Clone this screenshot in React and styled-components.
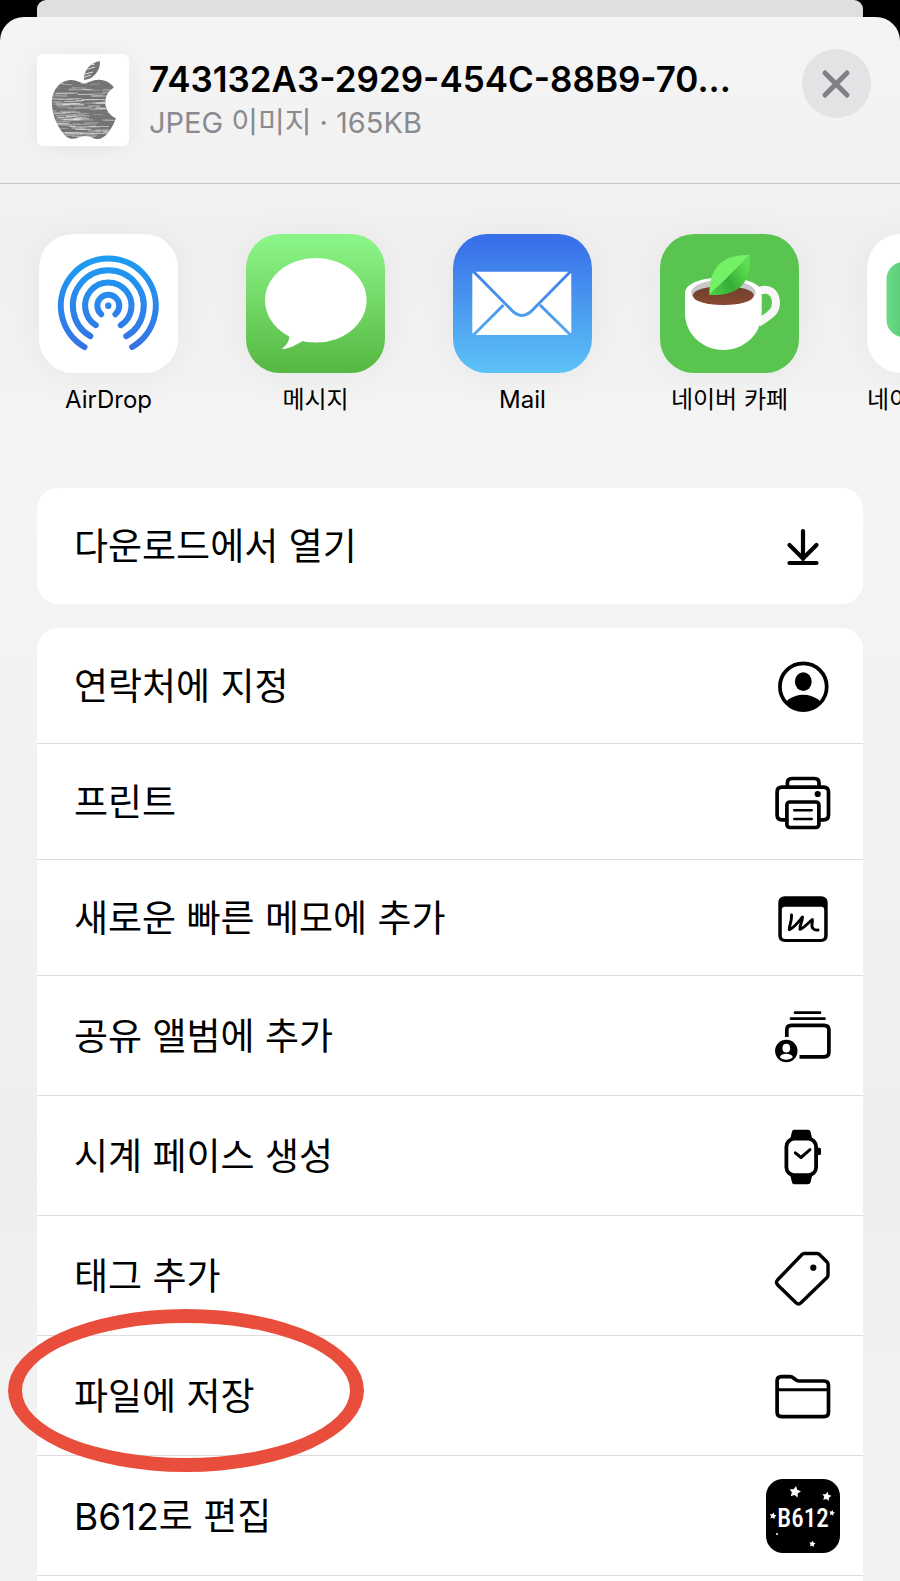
import React from 'react'
import styled, { css, createGlobalStyle } from 'styled-components';

const noise = (n) => {
  const v = Math.sin(n * 12.9898) * 43758.5453
  return v - Math.floor(v)
}

const scratches = Array.from({ length: 130 }, (_, i) => ({
  x: 8 + noise(i + 1) * 62,
  y: 28 + noise(i + 300) * 58,
  w: 5 + noise(i + 600) * 20,
  dy: noise(i + 900) * 1.4 - 0.7,
  o: 0.3 + noise(i + 1200) * 0.5,
}))

const star = (cx, cy, r) => Array.from({ length: 10 }, (_, i) => {
  const a = (i * 36 - 80) * Math.PI / 180
  const d = i % 2 ? r * 0.52 : r
  return `${(cx + d * Math.cos(a)).toFixed(2)},${(cy + d * Math.sin(a)).toFixed(2)}`
}).join(' ')

const AppleThumb = () => (
  <svg viewBox="0 0 92 92" aria-hidden="true">
    <clipPath id="apple">
      <path transform="translate(14.2 1.6) scale(.17 .174)" d="M318.7 268.7c-.2-36.7 16.4-64.4 50-84.8-18.8-26.9-47.2-41.7-84.7-44.6-35.5-2.8-74.3 20.7-88.5 20.7-15 0-49.4-19.7-76.4-19.7C63.3 141.2 4 184.8 4 273.5q0 39.3 14.4 81.2c12.8 36.7 59 126.7 107.2 125.2 25.2-.6 43-17.9 75.8-17.9 31.8 0 48.3 17.9 76.4 17.9 48.6-.7 90.4-82.5 102.6-119.3-65.2-30.7-61.7-90-61.7-91.9zm-56.6-164.2c27.3-32.4 24.8-61.9 24-72.5-24.1 1.4-52 16.4-67.9 34.9-17.5 19.8-27.8 44.3-25.6 71.9 26.1 2 49.9-11.4 69.5-34.3z" />
    </clipPath>
    <g clipPath="url(#apple)">
      <rect width="92" height="92" fill="#747474" />
      {scratches.map((s, i) => (
        <path key={i} d={`M${s.x} ${s.y}l${s.w} ${s.dy}`} stroke="#fff" strokeWidth=".7" opacity={s.o} />
      ))}
      <path d="M44 13l14-3M44 17l14-4M44 21l12-3M42 25l12-4" stroke="#fff" strokeWidth=".8" />
    </g>
  </svg>
)

const AirDropIcon = () => (
  <svg viewBox="0 0 139 139" aria-hidden="true">
    <linearGradient id="air" gradientUnits="userSpaceOnUse" x1="0" y1="22" x2="0" y2="116">
      <stop offset="0" stopColor="#1d9df3" />
      <stop offset="1" stopColor="#3671e4" />
    </linearGradient>
    <g fill="none" stroke="url(#air)" strokeWidth="6" strokeLinecap="round">
      <path d="M45.5 113A47.5 47.5 0 1 1 93.1 113" />
      <path d="M51.3 102.2A35.4 35.4 0 1 1 87.3 102.2" />
      <path d="M56.8 91.2A23.2 23.2 0 1 1 81.8 91.2" />
      <path d="M62.2 80.2A11 11 0 1 1 76.4 80.2" />
    </g>
    <circle cx="69.3" cy="71.7" r="3.2" fill="#2a87ea" />
  </svg>
)

const MessageIcon = () => (
  <svg viewBox="0 0 139 139" fill="#fff" aria-hidden="true">
    <ellipse cx="69.8" cy="66.3" rx="50.8" ry="42.3" />
    <path d="M42 98C45 104 42 110 36.7 114C35.8 115 37 115.3 38.5 115C45 114 50 110.5 56.5 107.2Z" />
  </svg>
)

const MailIcon = () => (
  <svg viewBox="0 0 139 139" aria-hidden="true">
    <linearGradient id="mail" gradientUnits="userSpaceOnUse" x1="0" y1="37" x2="0" y2="101">
      <stop offset="0" stopColor="#3f7fe9" />
      <stop offset="1" stopColor="#51a9ef" />
    </linearGradient>
    <rect x="19.3" y="37.7" width="99" height="63.4" rx="3" fill="#fff" />
    <path d="M20 37L57 74.5Q69 88.5 81 74.5L118 37M50.5 71L20 101.5M87 71L118 101.5" fill="none" stroke="url(#mail)" strokeWidth="2.9" />
  </svg>
)

const CafeIcon = () => (
  <svg viewBox="0 0 139 139" aria-hidden="true">
    <linearGradient id="leaf" x1="0" y1="1" x2="1" y2=".4">
      <stop offset="0" stopColor="#4fd64b" />
      <stop offset=".5" stopColor="#36ad35" />
      <stop offset="1" stopColor="#5ce052" />
    </linearGradient>
    <linearGradient id="coffee" x1="0" y1="0" x2="0" y2="1">
      <stop offset="0" stopColor="#68402e" />
      <stop offset="1" stopColor="#8d4a32" />
    </linearGradient>
    <path d="M99 57C109 53 116 59 116 69C116 79 108 82 98 89" fill="none" stroke="#f7f7f7" strokeWidth="8" />
    <path d="M25 59C25 50 40 43.5 63.3 43.5S101.7 50 101.7 59V79C101.7 100 84 116 63.3 116S25 100 25 79Z" fill="#fff" />
    <ellipse cx="63.3" cy="58.5" rx="32.3" ry="12.7" fill="#c9c9cb" />
    <ellipse cx="63.3" cy="61.5" rx="30.5" ry="9.6" fill="url(#coffee)" />
    <path d="M90 21C62 20 49 34 49.3 61Z" fill="#74f265" />
    <path d="M90 21C91 49 80 62 49.3 61Z" fill="url(#leaf)" />
  </svg>
)

const BoxIcon = () => (
  <svg viewBox="0 0 139 139" aria-hidden="true">
    <linearGradient id="box">
      <stop offset="0" stopColor="#6bdb87" />
      <stop offset=".3" stopColor="#4fbf6d" />
    </linearGradient>
    <rect x="19.5" y="28" width="100" height="75" rx="17" fill="url(#box)" />
  </svg>
)

const LineIcon = ({ children }) => (
  <svg viewBox="0 0 74 74" fill="none" stroke="#000" strokeWidth="3.7" strokeLinecap="round" strokeLinejoin="round" aria-hidden="true">
    {children}
  </svg>
)

const DownloadIcon = () => (
  <LineIcon>
    <path d="M37 22V50M23.5 36L37 49.5L50.5 36M23.5 54H50.5" strokeWidth="4.2" />
  </LineIcon>
)

const ContactIcon = () => (
  <LineIcon>
    <clipPath id="person"><circle cx="37.3" cy="37.7" r="23.5" /></clipPath>
    <ellipse cx="37.3" cy="32.7" rx="8.4" ry="9.4" fill="#000" stroke="none" />
    <ellipse cx="37.3" cy="61.3" rx="20.5" ry="15.5" fill="#000" stroke="none" clipPath="url(#person)" />
    <circle cx="37.3" cy="37.7" r="23.4" />
  </LineIcon>
)

const PrintIcon = () => (
  <LineIcon>
    <path d="M21.4 22V18Q21.4 13.5 26 13.5H48.5Q53 13.5 53 18V22" />
    <path d="M20.5 54.9H16Q11.1 54.9 11.1 50V27Q11.1 22.1 16 22.1H57.5Q62.5 22.1 62.5 27V50Q62.5 54.9 57.5 54.9H53.5" />
    <rect x="20.9" y="37" width="32" height="25.5" rx="3" />
    <path d="M28.3 45.3H45.7M28.3 54H45.7" strokeWidth="2.6" />
    <circle cx="51.7" cy="29" r="3.1" fill="#000" stroke="none" />
  </LineIcon>
)

const MemoIcon = () => (
  <LineIcon>
    <path d="M19 15.3H55Q61.7 15.3 61.7 22V54.5Q61.7 61 55 61H19Q12.3 61 12.3 54.5V22Q12.3 15.3 19 15.3ZM18.8 25.7Q15.8 25.7 15.8 28.7V54.5Q15.8 58 19.3 58H54.7Q58.2 58 58.2 54.5V28.7Q58.2 25.7 55.2 25.7Z" fill="#000" stroke="none" fillRule="evenodd" />
    <path d="M25.5 34C26 39 23.5 44 23.2 48.7C28 47 33 40 36.5 36C36.5 40 33.5 44 34 48.3C38 47 42 42 46.3 38.5C47 42 44.5 45 47 47.5Q49 49.5 52 49" strokeWidth="2.9" />
  </LineIcon>
)

const AlbumIcon = () => (
  <LineIcon>
    <path d="M29 13.7H54M25 19.7H58.5" strokeWidth="2.7" />
    <path d="M20.8 38V31Q20.8 26.4 25.5 26.4H58Q62.9 26.4 62.9 31V53Q62.9 57.9 58 57.9H33.5" strokeLinecap="butt" />
    <circle cx="20.3" cy="52" r="11.2" fill="#000" stroke="none" />
    <ellipse cx="20.3" cy="49.2" rx="3.8" ry="4.4" fill="#fff" stroke="none" />
    <path d="M13.8 58C15.5 53.8 25 53.8 26.8 58C24 61.6 16.5 61.6 13.8 58Z" fill="#fff" stroke="none" />
  </LineIcon>
)

const WatchIcon = () => (
  <LineIcon>
    <path d="M28 10.7H42Q44 10.7 44.5 12.5L46.5 21H24L26 12.5Q26.5 10.7 28 10.7ZM24 55H46.5L44.5 63.5Q44 65.3 42 65.3H28Q26.5 65.3 26 63.5Z" fill="#000" stroke="none" />
    <rect x="20.4" y="19.7" width="29.7" height="36.5" rx="8" strokeWidth="3.8" />
    <path d="M51 28.7H53.5Q55 28.7 55 30.5V34.5Q55 36 53.5 36H51Z" fill="#000" stroke="none" />
    <path d="M29.3 33.8L35 38.5L44 30.7" strokeWidth="3" />
  </LineIcon>
)

const TagIcon = () => (
  <LineIcon>
    <path d="M38 14.5H51Q52.5 14.5 53.5 15.5L61 23Q62 24 62 25.5V36Q62 37.5 61 38.5L35 63.8Q32.5 66 30 63.8L11.5 45.8Q9.5 43.3 11.5 41L36 15.5Q37 14.5 38 14.5Z" strokeWidth="3.4" />
    <circle cx="47.3" cy="28.7" r="3.1" fill="#000" stroke="none" />
  </LineIcon>
)

const FolderIcon = () => (
  <LineIcon>
    <path d="M11.1 22Q11.1 17.6 15.5 17.6H24Q26 17.6 27.5 19L29.5 20.7Q31 22 33 22H58Q62.5 22 62.5 26.5V53Q62.5 57.6 58 57.6H15.5Q11.1 57.6 11.1 53Z" />
    <path d="M12 30.7H62" strokeWidth="3" />
  </LineIcon>
)

const B612Icon = () => (
  <svg viewBox="0 0 74 74" fill="#fff" aria-hidden="true">
    <rect width="74" height="74" rx="17" fill="#000" />
    <LogoText x="37" y="48" textAnchor="middle">B612</LogoText>
    <polygon points={star(29, 13, 6)} />
    <polygon points={star(60.7, 17.5, 4.8)} />
    <polygon points={star(66, 34, 3)} />
    <polygon points={star(7, 37, 3.6)} />
    <polygon points={star(46.3, 65, 3.4)} />
    <circle cx="11" cy="55" r="1" />
  </svg>
)

const apps = [
  { name: 'AirDrop', bg: '#fff', icon: <AirDropIcon /> },
  { name: '메시지', bg: 'linear-gradient(#8bf486 5%, #55b741)', icon: <MessageIcon /> },
  { name: 'Mail', bg: 'linear-gradient(#3870e9 5%, #5dc3f7)', icon: <MailIcon /> },
  { name: '네이버 카페', bg: '#5ac451', icon: <CafeIcon /> },
  { name: '네이버 MYBOX', bg: '#fff', icon: <BoxIcon /> },
]

const actions = [
  { name: '연락처에 지정', icon: <ContactIcon /> },
  { name: '프린트', icon: <PrintIcon /> },
  { name: '새로운 빠른 메모에 추가', icon: <MemoIcon /> },
  { name: '공유 앨범에 추가', icon: <AlbumIcon />, tall: true },
  { name: '시계 페이스 생성', icon: <WatchIcon />, tall: true },
  { name: '태그 추가', icon: <TagIcon />, tall: true },
  { name: '파일에 저장', icon: <FolderIcon />, tall: true, marked: true },
  { name: 'B612로 편집', icon: <B612Icon />, tall: true },
]

function App() {
  return (
    <>
        <GlobalStyle />
        <Screen>
            <BackSheet />
            <Sheet>
                <Header>
                    <Thumb><AppleThumb /></Thumb>
                    <FileInfo>
                        <FileName>743132A3-2929-454C-88B9-70...</FileName>
                        <FileMeta>JPEG 이미지 · 165KB</FileMeta>
                    </FileInfo>
                    <Close type="button" aria-label="닫기">
                        <svg width="69" height="69" viewBox="0 0 69 69" aria-hidden="true">
                            <path d="M23 24L45 46M45 24L23 46" stroke="#808085" strokeWidth="5" strokeLinecap="round" />
                        </svg>
                    </Close>
                </Header>
                <Apps>
                    {apps.map((app) => (
                        <AppButton type="button" key={app.name}>
                            <Tile $bg={app.bg}>{app.icon}</Tile>
                            <AppName>{app.name}</AppName>
                        </AppButton>
                    ))}
                </Apps>
                <Groups>
                    <Group>
                        <Item>
                            <Action type="button">
                                <ActionName>다운로드에서 열기</ActionName>
                                <IconBox><DownloadIcon /></IconBox>
                            </Action>
                        </Item>
                    </Group>
                    <Group $open>
                        {actions.map((action) => (
                            <Item key={action.name} $divided>
                                <Action type="button" $tall={action.tall}>
                                    <ActionName>{action.name}</ActionName>
                                    <IconBox>{action.icon}</IconBox>
                                </Action>
                                {action.marked && <Marker />}
                            </Item>
                        ))}
                    </Group>
                </Groups>
            </Sheet>
        </Screen>
    </>
  )
}

export default App

const GlobalStyle = createGlobalStyle`
    * {
        box-sizing: border-box;
    }
    body {
        margin: 0;
        background: #000;
        font-family: Inter, 'Noto Sans CJK KR', sans-serif;
        color: #000;
    }
    svg {
        display: block;
    }
`
const plainButton = css`
    padding: 0;
    border: 0;
    background: none;
    color: inherit;
    font-family: inherit;
    cursor: pointer;
`
const Screen = styled.div`
    display: flex;
    flex-direction: column;
    height: 100vh;
    overflow: hidden;
`
const BackSheet = styled.div`
    flex: none;
    height: 17px;
    margin: 0 37px;
    background: #dfdfdf;
    border-radius: 9px 9px 0 0;
`
const Sheet = styled.main`
    flex: 1;
    display: flex;
    flex-direction: column;
    min-height: 0;
    background: linear-gradient(#f4f4f4 0, #f2f2f2 160px, #f0f0f0 240px, #f4f4f4 420px, #f3f3f3 640px, #f0f1f3 900px, #eeeeee 1150px, #f2f2f2 1400px);
    border-radius: 24px 24px 0 0;
`
const Header = styled.header`
    flex: none;
    display: flex;
    align-items: flex-start;
    gap: 20px;
    height: 167px;
    padding: 32px 29px 0 37px;
    border-bottom: 1px solid #c6c6c8;
`
const Thumb = styled.div`
    flex: none;
    width: 92px;
    margin-top: 5px;
    background: #fff;
    border-radius: 6px;
    box-shadow: 0 2px 24px rgba(0, 0, 0, 0.06);
`
const FileInfo = styled.div`
    flex: 1;
    min-width: 0;
    padding-top: 8px;
`
const FileName = styled.h1`
    margin: 0;
    overflow: hidden;
    font-size: 35px;
    font-weight: 600;
    line-height: 44px;
    white-space: nowrap;
`
const FileMeta = styled.p`
    margin: 0;
    color: #8a8a8e;
    font-size: 29px;
    line-height: 44px;
`
const Close = styled.button`
    ${plainButton}
    flex: none;
    width: 69px;
    height: 69px;
    background: #e3e3e6;
    border-radius: 50%;
`
const Apps = styled.nav`
    flex: none;
    display: flex;
    gap: 68px;
    padding: 50px 0 72px 39px;
    overflow: hidden;
`
const AppButton = styled.button`
    ${plainButton}
    flex: none;
    display: flex;
    flex-direction: column;
    gap: 11px;
    width: 139px;
`
const Tile = styled.span`
    width: 100%;
    background: ${(props) => props.$bg};
    border-radius: 34px;
    box-shadow: 0 2px 36px rgba(0, 0, 0, 0.05);
`
const AppName = styled.span`
    width: 100%;
    overflow: hidden;
    font-size: 24px;
    line-height: 32px;
    text-align: center;
    text-overflow: ellipsis;
    white-space: nowrap;
`
const Groups = styled.div`
    flex: 1;
    display: flex;
    flex-direction: column;
    gap: 24px;
    min-height: 0;
    padding: 0 37px;
`
const Group = styled.ul`
    flex: ${(props) => (props.$open ? '1 0 auto' : 'none')};
    margin: 0;
    padding: 0;
    list-style: none;
    background: #fff;
    border-radius: ${(props) => (props.$open ? '21px 21px 0 0' : '21px')};
`
const Item = styled.li`
    position: relative;
    border-bottom: 1px solid ${(props) => (props.$divided ? '#dddddf' : 'transparent')};
`
const Action = styled.button`
    ${plainButton}
    display: flex;
    align-items: center;
    justify-content: space-between;
    width: 100%;
    height: ${(props) => (props.$tall ? 119 : 115)}px;
    padding: 0 23px 0 37px;
    font-size: 37px;
    text-align: left;
`
const ActionName = styled.span`
    padding-bottom: 3px;
`
const IconBox = styled.span`
    flex: none;
    width: 74px;
`
/* hand drawn highlight ring around the row */
const Marker = styled.span`
    position: absolute;
    top: -27px;
    left: -29px;
    width: 356px;
    height: 163px;
    border: 14px solid #e94d3c;
    border-radius: 50%;
    pointer-events: none;
`
const LogoText = styled.text`
    font-family: 'Roboto Condensed', 'Liberation Sans Narrow', Lato, sans-serif;
    font-size: 25px;
    font-weight: 500;
`
